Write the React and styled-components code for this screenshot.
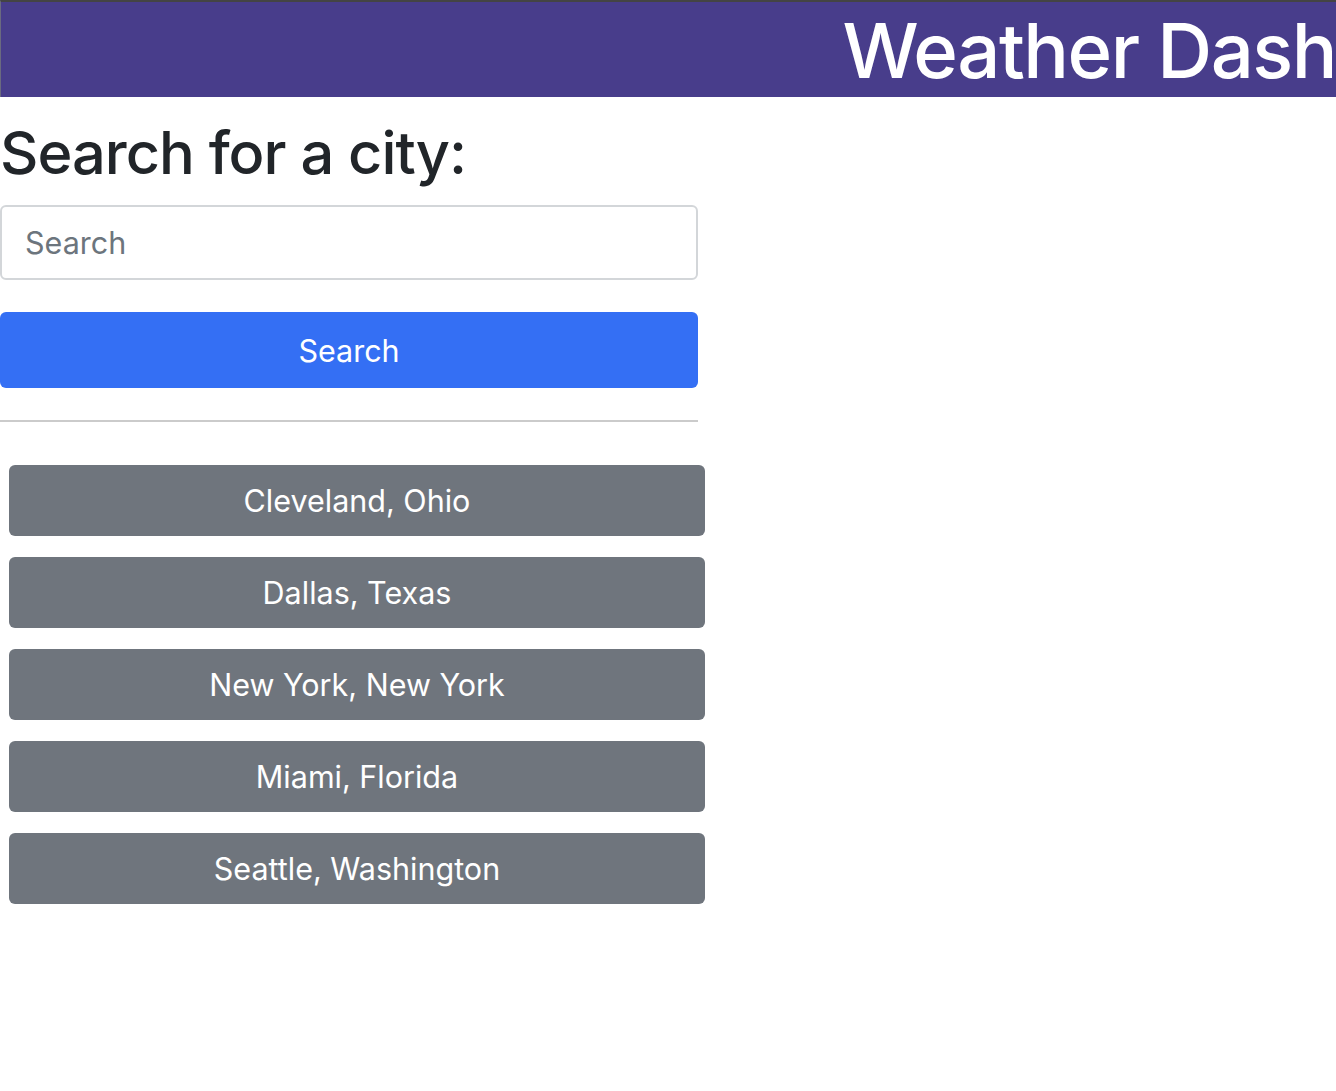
import React, { useState } from "react";
import styled, { createGlobalStyle } from "styled-components";

const GlobalStyle = createGlobalStyle`
  * {
    box-sizing: border-box;
  }
  body {
    margin: 0;
    background: #fff;
    font-family: Inter, "Liberation Sans", Arial, sans-serif;
    color: #212529;
  }
`;

const Header = styled.header`
  height: 97px;
  background-color: #483d8b;
  border-top: 2px solid #444;
  border-left: 1px solid #6a6a80;
  display: flex;
  align-items: center;
  justify-content: flex-end;
  overflow: hidden;
`;

const Title = styled.h1`
  margin: 0;
  color: #fff;
  font-size: 76px;
  font-weight: 500;
  letter-spacing: -1.5px;
  line-height: 1;
  white-space: nowrap;
`;

const Sidebar = styled.section`
  width: 698px;
  display: flex;
  flex-direction: column;
`;

const Heading = styled.h2`
  margin: 23px 0 20px;
  font-size: 59.5px;
  font-weight: 500;
  letter-spacing: -1px;
  line-height: 1.1;
`;

const SearchInput = styled.input`
  width: 100%;
  height: 75px;
  padding: 0 23px;
  font-family: inherit;
  font-size: 30.5px;
  color: #212529;
  border: 2px solid #d3d6d9;
  border-radius: 6px;
  outline: none;

  &::placeholder {
    color: #6c757d;
  }
`;

const SearchButton = styled.button`
  margin-top: 32px;
  width: 100%;
  height: 76px;
  border: none;
  border-radius: 6px;
  background-color: #346ff4;
  color: #fff;
  font-family: inherit;
  font-size: 30.5px;
  cursor: pointer;
`;

const Divider = styled.hr`
  margin: 32px 0 0;
  border: none;
  border-top: 2px solid #cbcbcb;
`;

const CityList = styled.div`
  width: 705px;
  padding: 43px 0 0 9px;
  display: flex;
  flex-direction: column;
  gap: 21px;
`;

const CityButton = styled.button`
  height: 71px;
  border: none;
  border-radius: 6px;
  background-color: ${props => (props.$active ? "#5c636a" : "#6f757d")};
  color: #fff;
  font-family: inherit;
  font-size: 30.5px;
  cursor: pointer;
`;

const cities = [
  "Cleveland, Ohio",
  "Dallas, Texas",
  "New York, New York",
  "Miami, Florida",
  "Seattle, Washington",
];

const App = () => {
  const [query, setQuery] = useState("");
  const [selected, setSelected] = useState(null);

  return (
    <>
      <GlobalStyle />
      <Header>
        <Title>Weather Dash</Title>
      </Header>
      <Sidebar>
        <Heading>Search for a city:</Heading>
        <SearchInput
          placeholder="Search"
          value={query}
          onChange={e => setQuery(e.target.value)}
        />
        <SearchButton>Search</SearchButton>
        <Divider />
      </Sidebar>
      <CityList>
        {cities.map(city => (
          <CityButton
            key={city}
            $active={selected === city}
            onClick={() => setSelected(city)}
          >
            {city}
          </CityButton>
        ))}
      </CityList>
    </>
  );
};

export default App;
